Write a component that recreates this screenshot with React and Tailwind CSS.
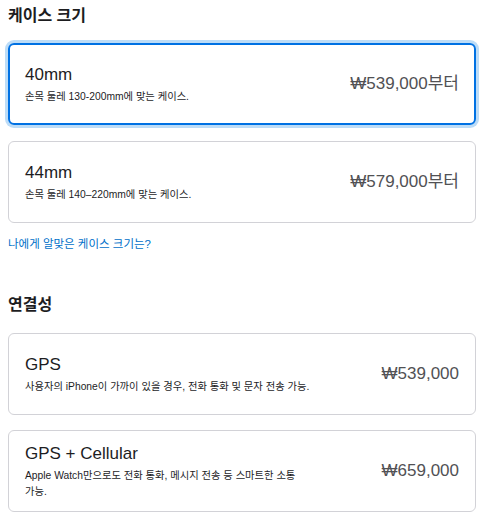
const font = { fontFamily: '"Liberation Sans", "Noto Sans CJK KR", sans-serif' };
const priceFont = { fontFamily: '"Liberation Sans", "Noto Sans", "Noto Sans CJK KR", sans-serif' };

const sizes = [
  { id: '40', title: '40mm', desc: '손목 둘레 130-200mm에 맞는 케이스.', price: '₩539,000부터' },
  { id: '44', title: '44mm', desc: '손목 둘레 140–220mm에 맞는 케이스.', price: '₩579,000부터' },
];

const connectivity = [
  { id: 'gps', title: 'GPS', desc: '사용자의 iPhone이 가까이 있을 경우, 전화 통화 및 문자 전송 가능.', price: '₩539,000' },
  { id: 'cell', title: 'GPS + Cellular', desc: 'Apple Watch만으로도 전화 통화, 메시지 전송 등 스마트한 소통 가능.', price: '₩659,000' },
];

function OptionCard({ title, desc, price, selected }) {
  return (
    <div
      className={
        selected
          ? 'flex min-h-[82px] items-center justify-between rounded-[6px] border-2 border-[#0071e3] px-[15px] shadow-[0_0_0_3px_#bcdcf7]'
          : 'flex min-h-[82px] items-center justify-between rounded-[6px] border border-[#d2d2d7] px-4'
      }
    >
      <div className="flex max-w-[292px] flex-col">
        <span className="text-[17px] leading-[22px] text-[#1d1d1f]">{title}</span>
        <span className="mt-[3px] break-keep text-[10.3px] leading-4 text-[#1d1d1f]">{desc}</span>
      </div>
      <span className="text-[17px] text-[#515154]" style={priceFont}>{price}</span>
    </div>
  );
}

export default function App() {
  const size = sizes[0].id;

  return (
    <div className="bg-white pl-2 pr-[6px] pt-1" style={font}>
      <h2 className="text-[16px] font-bold leading-6 text-[#1d1d1f]">케이스 크기</h2>
      <div className="mt-[15px] flex flex-col gap-4">
        {sizes.map((s) => (
          <OptionCard key={s.id} {...s} selected={s.id === size} />
        ))}
      </div>
      <a className="mt-3 block text-[11.5px] leading-[18px] text-[#0070c9]">나에게 알맞은 케이스 크기는?</a>

      <h2 className="mt-10 text-[16px] font-bold leading-6 text-[#1d1d1f]">연결성</h2>
      <div className="mt-4 flex flex-col gap-[15px]">
        {connectivity.map((c) => (
          <OptionCard key={c.id} {...c} />
        ))}
      </div>
    </div>
  );
}
